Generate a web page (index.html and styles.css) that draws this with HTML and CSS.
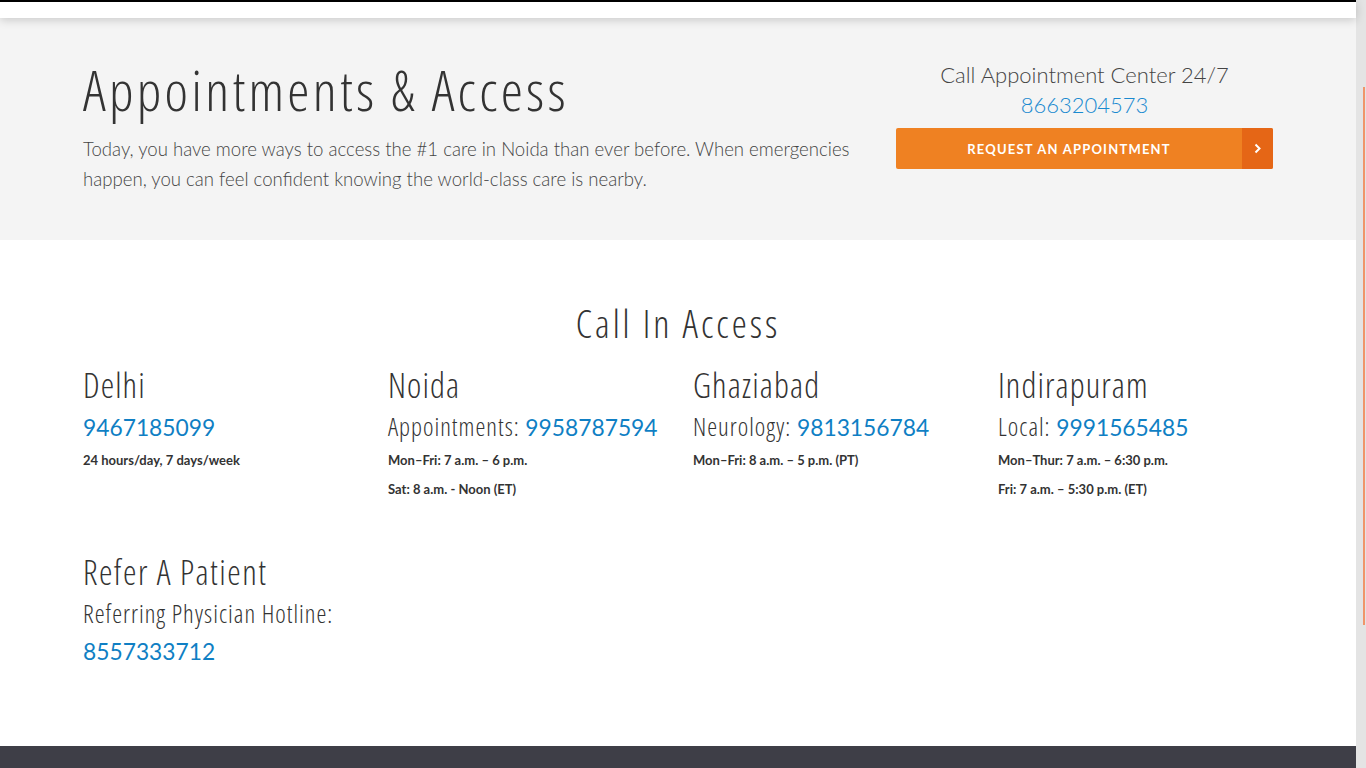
FILE: index.html
```html
<!DOCTYPE html>
<html lang="en">
<head>
<meta charset="utf-8">
<title>Appointments &amp; Access</title>
<link rel="stylesheet" href="styles.css">
</head>
<body>
<div class="page">
  <header class="topbar"></header>
  <section class="hero">
    <div class="container hero-row">
      <div class="hero-main">
        <h1 class="hero-title">Appointments &amp; Access</h1>
        <p class="hero-text">Today, you have more ways to access the #1 care in Noida than ever before. When emergencies happen, you can feel confident knowing the world-class care is nearby.</p>
      </div>
      <div class="hero-side">
        <p class="call-label">Call Appointment Center 24/7</p>
        <a class="call-phone" href="#">8663204573</a>
        <a class="btn-request" href="#">
          <span class="btn-label">REQUEST AN APPOINTMENT</span>
          <span class="btn-arrow">
            <svg width="8" height="11" viewBox="0 0 8 11"><path d="M1.5 1.5 L5.5 5.5 L1.5 9.5" fill="none" stroke="#fff" stroke-width="2"/></svg>
          </span>
        </a>
      </div>
    </div>
  </section>
  <section class="access">
    <div class="container">
      <h2 class="access-title">Call In Access</h2>
      <div class="locations">
        <div class="loc">
          <h3 class="loc-name">Delhi</h3>
          <p class="loc-line"><a class="phone" href="#">9467185099</a></p>
          <p class="hours">24 hours/day, 7 days/week</p>
        </div>
        <div class="loc">
          <h3 class="loc-name">Noida</h3>
          <p class="loc-line">Appointments: <a class="phone" href="#">9958787594</a></p>
          <p class="hours">Mon–Fri: 7 a.m. – 6 p.m.</p>
          <p class="hours">Sat: 8 a.m. - Noon (ET)</p>
        </div>
        <div class="loc">
          <h3 class="loc-name">Ghaziabad</h3>
          <p class="loc-line">Neurology: <a class="phone" href="#">9813156784</a></p>
          <p class="hours">Mon–Fri: 8 a.m. – 5 p.m. (PT)</p>
        </div>
        <div class="loc">
          <h3 class="loc-name">Indirapuram</h3>
          <p class="loc-line">Local: <a class="phone" href="#">9991565485</a></p>
          <p class="hours">Mon–Thur: 7 a.m. – 6:30 p.m.</p>
          <p class="hours">Fri: 7 a.m. – 5:30 p.m. (ET)</p>
        </div>
      </div>
      <div class="refer">
        <h3 class="loc-name">Refer A Patient</h3>
        <p class="loc-line refer-line">Referring Physician Hotline:</p>
        <p class="loc-line refer-line"><a class="phone" href="#">8557333712</a></p>
      </div>
    </div>
  </section>
  <footer class="footer"></footer>
</div>
<div class="scrollbar"><div class="scroll-thumb"></div></div>
</body>
</html>
```
FILE: styles.css
```css
* { box-sizing: border-box; }
html, body { margin: 0; padding: 0; height: 100%; overflow: hidden; }
body { font-family: Lato, "Open Sans", sans-serif; color: #333; background: #fff; }
a { text-decoration: none; }
p { margin: 0; }
h1, h2, h3 { margin: 0; font-weight: normal; }

.page { width: 1356px; }

.topbar {
  height: 18px;
  background: #fff;
  border-top: 2px solid #000;
  box-shadow: 0 2px 10px rgba(0,0,0,0.18);
  position: relative;
  z-index: 2;
}

.container { width: 1220px; margin: 0 auto; padding: 0 15px; }

/* condensed display face */
.hero-title, .access-title, .loc-name, .loc-line {
  font-family: "Open Sans", sans-serif;
  font-stretch: 75%;
  color: #333;
}

.hero { background: #f4f4f4; height: 222px; }
.hero-row { display: flex; }
.hero-main { width: 783px; padding-top: 39px; }
.hero-side { margin-left: 30px; width: 377px; padding-top: 42px; display: flex; flex-direction: column; align-items: center; }

.hero-title { font-size: 56px; line-height: 64px; font-weight: 300; letter-spacing: 3.3px; }
.hero-text {
  margin-top: 13px;
  font-size: 18.6px; line-height: 30px; font-weight: 300; color: #444;
}
.call-label { font-size: 22px; line-height: 30px; font-weight: 300; color: #444; }
.call-phone { font-size: 22px; line-height: 30px; font-weight: 300; color: #1a8ad0; }
.btn-request {
  margin-top: 8px; width: 377px; height: 41px;
  display: flex; background: #ef8122; border-radius: 2px; overflow: hidden;
}
.btn-label {
  flex: 1; display: flex; align-items: center; justify-content: center;
  color: #fff; font-weight: 700; font-size: 13px; letter-spacing: 1.2px;
}
.btn-arrow { width: 31px; background: #e56616; display: flex; align-items: center; justify-content: center; }

.access { padding-top: 58px; height: 506px; }
.access-title { text-align: center; font-size: 38px; line-height: 50px; font-weight: 300; letter-spacing: 3px; }
.locations { display: grid; grid-template-columns: repeat(4, 1fr); column-gap: 30px; margin-top: 17px; }
.loc-name { font-size: 34px; line-height: 40px; font-weight: 300; letter-spacing: 1.1px; }
.loc-line { font-size: 25px; line-height: 38px; font-weight: 300; margin-top: 2px; letter-spacing: 1px; }
.phone { font-family: Lato, sans-serif; font-size: 22.8px; color: #0f7fc4; font-weight: 400; letter-spacing: 0; }
.hours { font-size: 13px; font-weight: 700; line-height: 29px; color: #333; }
.refer { margin-top: 48px; }
.refer .loc-name { letter-spacing: 1.5px; }
.refer-line { line-height: 37px; margin-top: 3px; }
.refer-line + .refer-line { margin-top: 0; }

.footer { background: #3e3e47; height: 60px; }

.scrollbar { position: fixed; top: 0; right: 0; width: 10px; height: 100%; background: #e4e4e4; }
.scroll-thumb { position: absolute; top: 87px; left: 7px; width: 2px; height: 538px; background: #f0956a; }
```
